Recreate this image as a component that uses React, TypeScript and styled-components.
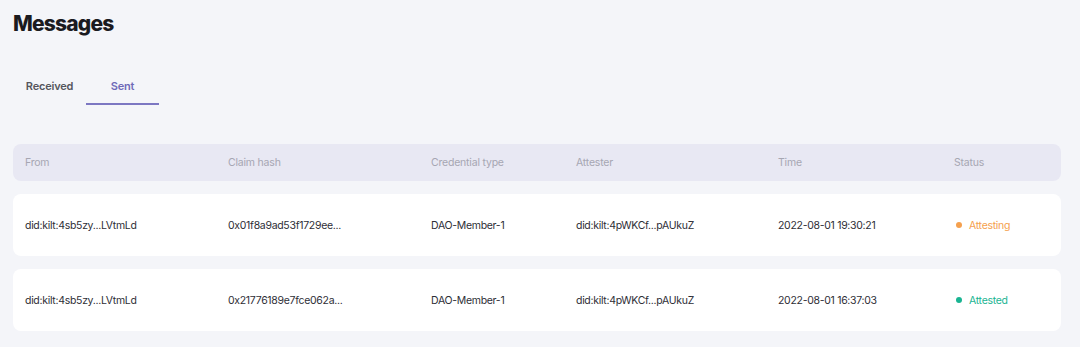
import React, { useState } from "react";
import styled, { createGlobalStyle } from "styled-components";

const GlobalStyle = createGlobalStyle`
  html, body {
    margin: 0;
    padding: 0;
    background: #f4f5f9;
  }
  body {
    font-family: Inter, "Noto Sans", "Liberation Sans", sans-serif;
    color: #2b2b33;
  }
`;

const Page = styled.div`
  width: 1080px;
  height: 347px;
  box-sizing: border-box;
  padding: 11px 19px 0 13px;
  background: #f4f5f9;
  overflow: hidden;
`;

const Title = styled.h1`
  margin: 0;
  font-size: 21px;
  line-height: 26px;
  font-weight: 800;
  color: #1b1b1f;
  letter-spacing: -0.8px;
`;

const Tabs = styled.div`
  display: flex;
  margin-top: 35px;
`;

const Tab = styled.button<{ $active?: boolean }>`
  width: 73px;
  height: 33px;
  padding: 0 0 4px;
  border: none;
  background: transparent;
  font-family: inherit;
  font-size: 11px;
  font-weight: 600;
  letter-spacing: -0.2px;
  color: ${(p) => (p.$active ? "#6f6ab8" : "#55555e")};
  border-bottom: 2px solid ${(p) => (p.$active ? "#7c77c2" : "transparent")};
  cursor: pointer;
`;

const Table = styled.div`
  margin-top: 39px;
  display: flex;
  flex-direction: column;
  gap: 13px;
`;

const cols = "203px 203px 145px 202px 176px 1fr";

const HeadRow = styled.div`
  display: grid;
  grid-template-columns: ${cols};
  align-items: center;
  height: 37px;
  padding: 0 12px;
  background: #e8e8f3;
  border-radius: 8px;
  font-size: 10.5px;
  letter-spacing: -0.2px;
  color: #a6a6b2;
`;

const Row = styled.div`
  display: grid;
  grid-template-columns: ${cols};
  align-items: center;
  height: 62px;
  padding: 0 12px;
  background: #ffffff;
  border-radius: 8px;
  font-size: 10.5px;
  letter-spacing: -0.3px;
  color: #2e2e36;
`;

const Cell = styled.div`
  white-space: nowrap;
`;

const Status = styled.div<{ $color: string }>`
  display: flex;
  align-items: center;
  gap: 7px;
  padding-left: 2px;
  color: ${(p) => p.$color};
  &::before {
    content: "";
    width: 6px;
    height: 6px;
    border-radius: 50%;
    background: ${(p) => p.$color};
  }
`;

type Msg = {
  from: string;
  hash: string;
  ctype: string;
  attester: string;
  time: string;
  status: "Attesting" | "Attested";
};

const data: Msg[] = [
  {
    from: "did:kilt:4sb5zy...LVtmLd",
    hash: "0x01f8a9ad53f1729ee...",
    ctype: "DAO-Member-1",
    attester: "did:kilt:4pWKCf...pAUkuZ",
    time: "2022-08-01 19:30:21",
    status: "Attesting",
  },
  {
    from: "did:kilt:4sb5zy...LVtmLd",
    hash: "0x21776189e7fce062a...",
    ctype: "DAO-Member-1",
    attester: "did:kilt:4pWKCf...pAUkuZ",
    time: "2022-08-01 16:37:03",
    status: "Attested",
  },
];

const statusColor = { Attesting: "#f5a04e", Attested: "#19b492" };

export default function App() {
  const [tab, setTab] = useState<"received" | "sent">("sent");
  return (
    <Page>
      <GlobalStyle />
      <Title>Messages</Title>
      <Tabs>
        <Tab $active={tab === "received"} onClick={() => setTab("received")}>
          Received
        </Tab>
        <Tab $active={tab === "sent"} onClick={() => setTab("sent")}>
          Sent
        </Tab>
      </Tabs>
      <Table>
        <HeadRow>
          <Cell>From</Cell>
          <Cell>Claim hash</Cell>
          <Cell>Credential type</Cell>
          <Cell>Attester</Cell>
          <Cell>Time</Cell>
          <Cell>Status</Cell>
        </HeadRow>
        {data.map((m, i) => (
          <Row key={i}>
            <Cell>{m.from}</Cell>
            <Cell>{m.hash}</Cell>
            <Cell>{m.ctype}</Cell>
            <Cell>{m.attester}</Cell>
            <Cell>{m.time}</Cell>
            <Status $color={statusColor[m.status]}>{m.status}</Status>
          </Row>
        ))}
      </Table>
    </Page>
  );
}
